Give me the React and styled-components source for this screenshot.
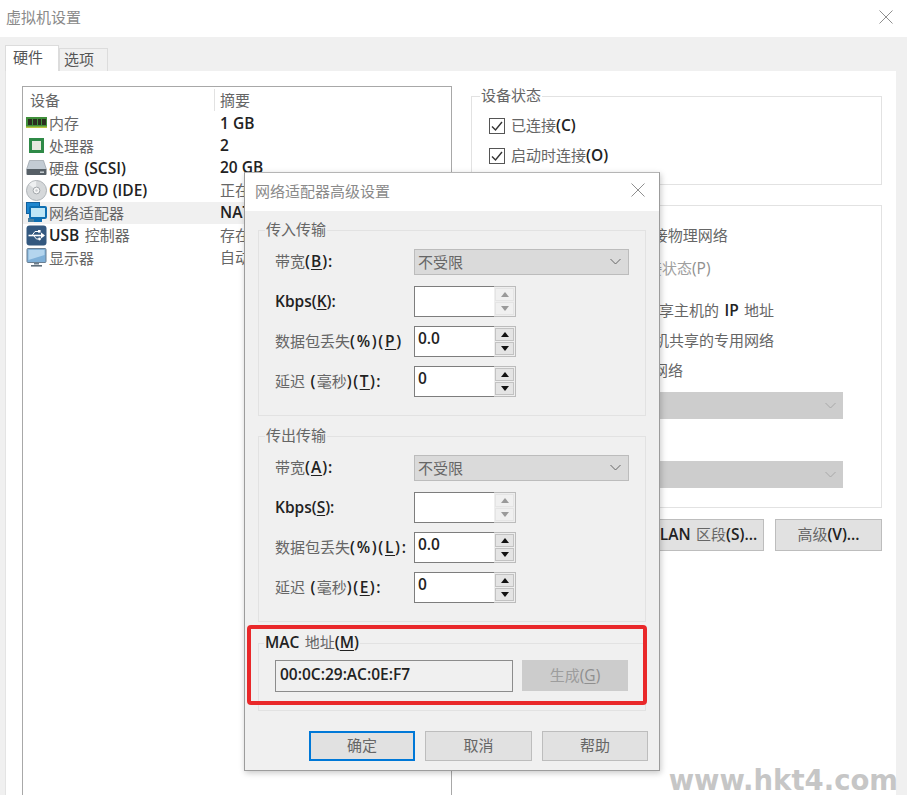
import React from 'react';
import styled, { createGlobalStyle } from 'styled-components';

const Global = createGlobalStyle`
  html, body { margin: 0; padding: 0; background: #fff; }
  body { font-family: "Noto Sans CJK SC", "Open Sans", sans-serif; font-size: 15px; color: #666; word-spacing: 2px; }
  * { box-sizing: border-box; }
`;

const Window = styled.div`
  position: relative;
  width: 907px;
  height: 795px;
  overflow: hidden;
  display: flex;
  flex-direction: column;
  background: #f0f0f0;
`;

const TitleBar = styled.div`
  display: flex;
  align-items: center;
  justify-content: space-between;
  flex: none;
  height: ${p => p.$h}px;
  padding: ${p => p.$pad};
  background: #fff;
  color: #8a8a8a;
  font-size: 15px;
`;

const Tabs = styled.div`
  display: flex;
  align-items: flex-end;
  flex: none;
  height: 34px;
  padding-left: 5px;
`;

const Tab = styled.div`
  display: flex;
  align-items: center;
  width: ${p => p.$w}px;
  height: ${p => (p.$active ? 26 : 23)}px;
  padding: 0 0 ${p => (p.$active ? 4 : 3)}px ${p => p.$pad}px;
  background: ${p => (p.$active ? '#fff' : '#f0f0f0')};
  border: 1px solid #dcdcdc;
  border-bottom: none;
  color: #555;
  line-height: 1;
`;

const Content = styled.div`
  flex: 1;
  min-height: 0;
  display: flex;
  gap: 19px;
  margin: 0 11px 0 5px;
  padding: 15px 14px 0 17px;
  background: #fff;
  border-left: 1px solid #e4e4e4;
`;

const DeviceList = styled.div`
  flex: none;
  width: 430px;
  margin-left: -1px;
  border: 1px solid #a8a8a8;
  border-bottom: none;
`;

const DeviceHead = styled.div`
  display: grid;
  grid-template-columns: 192px 1fr;
  height: 25px;
  padding-top: 1px;
  align-items: center;
  line-height: 22px;
`;

const HeadCell = styled.div`
  height: 22px;
  padding-left: ${p => p.$pad}px;
  border-right: ${p => (p.$sep ? '1px solid #e2e2e2' : 'none')};
`;

const DeviceRow = styled.div`
  display: grid;
  grid-template-columns: 192px 1fr;
  align-items: center;
  height: 22.4px;
  background: ${p => (p.$selected ? '#f0f0f0' : 'transparent')};
  white-space: nowrap;
  line-height: 20px;
`;

const DeviceName = styled.div`
  display: flex;
  align-items: center;
  gap: 2px;
  padding-left: 3px;
`;

const DeviceValue = styled.div`
  padding: 0 0 1px 5px;
`;

const Lt = styled.span`
  font-family: "Open Sans", "Noto Sans", sans-serif;
  font-size: 15.5px;
  font-weight: ${p => (p.$muted ? 500 : 600)};
  color: ${p => (p.$muted ? '#8f8f8f' : '#222')};
  word-spacing: 0;
  letter-spacing: ${p => p.$ls || 0}px;
  u { text-underline-offset: 2px; }
`;

const RightColumn = styled.div`
  flex: 1;
  min-width: 0;
  display: flex;
  flex-direction: column;
  padding-top: 1px;
`;

const Group = styled.fieldset`
  margin: ${p => p.$mt || 0}px 0 0;
  padding: ${p => p.$pad};
  height: ${p => p.$h}px;
  flex: none;
  min-width: 0;
  border: 1px solid #e2e2e2;
`;

const Legend = styled.legend`
  height: 18px;
  padding: 0 1px;
  margin-left: ${p => p.$ml || 0}px;
  font-size: 15px;
  line-height: 16px;
  white-space: nowrap;
`;

const CheckRow = styled.label`
  display: flex;
  align-items: center;
  gap: 6px;
  height: 30px;
  white-space: nowrap;
`;

const CheckText = styled.span`
  padding-bottom: 2px;
`;

const CheckBox = styled.span`
  display: flex;
  width: 16px;
  height: 16px;
  border: 1px solid #555;
  background: #fff;
`;

const NetRow = styled.div`
  height: ${p => p.$h}px;
  margin-top: ${p => p.$mt || 0}px;
  padding-left: ${p => p.$indent}px;
  line-height: ${p => p.$h - 3}px;
  color: ${p => (p.$muted ? '#a0a0a0' : 'inherit')};
  white-space: nowrap;
`;

const GreySelect = styled.div`
  display: flex;
  align-items: center;
  justify-content: flex-end;
  width: 345px;
  height: 27px;
  margin-top: ${p => p.$mt}px;
  margin-left: 26px;
  padding-right: 7px;
  background: #cdcdcd;
`;

const ButtonBar = styled.div`
  display: flex;
  justify-content: flex-end;
  gap: ${p => p.$gap}px;
  margin: ${p => p.$mt}px ${p => p.$mr || 0}px 0 0;
`;

const Button = styled.div`
  width: ${p => p.$w}px;
  height: ${p => p.$h}px;
  background: #e1e1e1;
  border: ${p => (p.$primary ? '2px solid #0078d7' : '1px solid #bdbdbd')};
  line-height: ${p => p.$h - (p.$primary ? 7 : 5)}px;
  text-align: center;
  white-space: nowrap;
`;

/* dialog lies over the settings window */
const Dialog = styled.div`
  position: absolute;
  left: 244px;
  top: 172px;
  width: 416px;
  height: 599px;
  display: flex;
  flex-direction: column;
  background: #f0f0f0;
  border: 1px solid #9c9c9c;
  border-top-color: #b5b5b5;
  box-shadow: 1px 2px 6px rgba(0, 0, 0, 0.22);
`;

const DialogBody = styled.div`
  flex: 1;
  padding: 10px 13px 0;
`;

const FormGrid = styled.div`
  display: grid;
  grid-template-columns: 139px auto;
  justify-content: start;
  align-items: center;
  padding-top: 10px;
`;

const FormLabel = styled.div`
  white-space: nowrap;
  margin-top: ${p => p.$mt || 0}px;
  padding-bottom: 2px;
`;

const Select = styled.div`
  display: flex;
  align-items: center;
  justify-content: space-between;
  width: 215px;
  height: 26px;
  padding: 0 7px 2px 3px;
  background: #dadada;
  border: 1px solid #bcbcbc;
  color: #666;
`;

const Spin = styled.div`
  display: flex;
  width: 102px;
  height: 31px;
  margin-top: ${p => p.$mt}px;
  background: #eee;
  border: 1px solid #bcbcbc;
`;

const SpinInput = styled.div`
  flex: none;
  width: 80px;
  padding: 0 0 0 3px;
  margin: -1px 0 -1px -1px;
  background: #fff;
  border: 1px solid #7d7d7d;
  border-right: none;
  line-height: 22px;
`;

const SpinButtons = styled.div`
  flex: 1;
  display: flex;
  flex-direction: column;
  gap: 1px;
  padding: 1px;
`;

const SpinButton = styled.div`
  flex: 1;
  display: flex;
  align-items: center;
  justify-content: center;
  background: ${p => (p.$on ? '#e4e4e4' : '#f0f0f0')};
  border: 1px solid ${p => (p.$on ? '#c2c2c2' : '#e4e4e4')};

  &::after {
    content: "";
    border-left: 4px solid transparent;
    border-right: 4px solid transparent;
    ${p => (p.$down ? 'border-top' : 'border-bottom')}: 5px solid ${p => (p.$on ? '#111' : '#9a9a9a')};
  }
`;

const MacRow = styled.div`
  display: flex;
  gap: 9px;
  padding: 8px 0 0 16px;
`;

const MacInput = styled.div`
  width: 238px;
  height: 32px;
  padding: 0 0 0 4px;
  background: #f0f0f0;
  border: 1px solid #8c8c8c;
  line-height: 25px;
  white-space: nowrap;
`;

const GenerateButton = styled.div`
  width: 106px;
  height: 31px;
  background: #cccccc;
  color: #9d9d9d;
  line-height: 30px;
  text-align: center;
  white-space: nowrap;
`;

/* annotation drawn over the screenshot */
const Highlight = styled.div`
  position: absolute;
  left: 2px;
  top: 452px;
  width: 400px;
  height: 80px;
  border: 4px solid #e9282a;
  border-radius: 4px;
  pointer-events: none;
`;

const Watermark = styled.div`
  position: absolute;
  right: 9px;
  bottom: 1px;
  font-family: "DejaVu Sans", sans-serif;
  font-weight: 700;
  font-size: 27.5px;
  line-height: 28px;
  word-spacing: 0;
  color: #c6c6c6;
`;

const Close = () => (
  <svg width="14" height="14" viewBox="0 0 14 14" fill="none" stroke="#8f8f8f" strokeWidth="1">
    <path d="M0.5 0.5 13.5 13.5M13.5 0.5 0.5 13.5" />
  </svg>
);

const Chevron = ({ color = '#666' }) => (
  <svg width="11" height="7" viewBox="0 0 11 7" fill="none" stroke={color} strokeWidth="1">
    <path d="M0.5 1 5.5 6 10.5 1" />
  </svg>
);

const Tick = () => (
  <svg width="14" height="14" viewBox="0 0 14 14" fill="none" stroke="#333" strokeWidth="1.4">
    <path d="M2 7.5 5.5 11 12 3" />
  </svg>
);

const Ico = ({ children }) => (
  <svg width="21" height="21" viewBox="0 0 21 21" style={{ flex: 'none' }}>{children}</svg>
);

const MemoryIcon = () => (
  <Ico>
    <rect x="0" y="4" width="21" height="11" fill="#3f8f3a" />
    <rect x="2" y="6" width="4" height="6" fill="#2b2f20" />
    <rect x="7" y="6" width="4" height="6" fill="#2b2f20" />
    <rect x="12" y="6" width="3" height="6" fill="#2b2f20" />
    <rect x="16" y="6" width="4" height="6" fill="#2b2f20" />
    <rect x="0" y="13.5" width="21" height="1.5" fill="#b7c63f" />
  </Ico>
);

const CpuIcon = () => (
  <Ico>
    <rect x="3" y="3" width="15" height="15" fill="#2f8a47" />
    <rect x="6" y="6" width="9" height="9" fill="#e9e9df" />
  </Ico>
);

const DiskIcon = () => (
  <Ico>
    <path d="M3.5 3.5h14l3 9H.5z" fill="#c3ccd4" stroke="#8b949c" strokeWidth=".6" />
    <rect x="0.5" y="12" width="20" height="6" rx="1" fill="#565f66" />
    <rect x="14" y="14.5" width="4" height="1.4" fill="#cfd6da" />
  </Ico>
);

const CdIcon = () => (
  <Ico>
    <circle cx="10.5" cy="10.5" r="10" fill="#d5d8da" stroke="#aeb3b7" />
    <path d="M10.5 10.5 3 4.5A10 10 0 0 1 10 1z" fill="#eef0f1" />
    <circle cx="10.5" cy="10.5" r="3.4" fill="#f6f6f6" stroke="#a3a8ac" />
    <circle cx="10.5" cy="10.5" r="1.2" fill="#c6cacd" />
  </Ico>
);

const NetworkIcon = () => (
  <Ico>
    <rect x="0.5" y="0.5" width="13" height="11" fill="#1f87cf" stroke="#125f9c" />
    <path d="M2 16h11v4H2z" fill="#4a7f9f" />
    <rect x="4" y="5" width="16" height="11" rx="1" fill="#bfe6f6" stroke="#0e6fb2" strokeWidth="2" />
    <path d="M8 17h8v3H8z" fill="#0e6fb2" />
  </Ico>
);

const UsbIcon = () => (
  <Ico>
    <rect x="0.5" y="0.5" width="20" height="20" rx="3" fill="#33587f" />
    <path d="M2.5 10.5h15" stroke="#fff" strokeWidth="1.6" />
    <path d="M15 7.5l4 3-4 3z" fill="#fff" />
    <path d="M6 10.5 9 6.5h3.5M7.5 10.5l3 3.5h2" stroke="#fff" fill="none" />
    <rect x="12" y="5" width="2.6" height="2.6" fill="#fff" />
    <circle cx="13.5" cy="14" r="1.4" fill="#fff" />
  </Ico>
);

const DisplayIcon = () => (
  <Ico>
    <rect x="1" y="1.5" width="19" height="14" rx="1" fill="#7fb0d8" stroke="#6a7f92" />
    <path d="M2.5 3h16v5L2.5 13z" fill="#b4d5ee" />
    <path d="M8 15.5h5v2H8z" fill="#6d7f8d" />
    <path d="M5 18h11v1.6H5z" fill="#5f6f7c" />
  </Ico>
);

const devices = [
  { icon: <MemoryIcon />, name: '内存', value: <Lt>1 GB</Lt> },
  { icon: <CpuIcon />, name: '处理器', value: <Lt>2</Lt> },
  { icon: <DiskIcon />, name: <>硬盘 <Lt>(SCSI)</Lt></>, value: <Lt>20 GB</Lt> },
  { icon: <CdIcon />, name: <Lt>CD/DVD (IDE)</Lt>, value: '正在使用文件' },
  { icon: <NetworkIcon />, name: '网络适配器', value: <Lt>NAT</Lt>, selected: true },
  { icon: <UsbIcon />, name: <><Lt>USB</Lt> 控制器</>, value: '存在' },
  { icon: <DisplayIcon />, name: '显示器', value: '自动检测' },
];

const SpinField = ({ value, on, mt }) => (
  <Spin $mt={mt}>
    <SpinInput><Lt>{value}</Lt></SpinInput>
    <SpinButtons>
      <SpinButton $on={on} />
      <SpinButton $on={on} $down />
    </SpinButtons>
  </Spin>
);

const TransferGroup = ({ title, h, mt, keys, colon }) => (
  <Group $h={h} $mt={mt} $pad="0 0 0 16px">
    <Legend $ml={-10}>{title}</Legend>
    <FormGrid>
      <FormLabel>带宽<Lt $ls={1}>(<u>{keys[0]}</u>):</Lt></FormLabel>
      <Select>不受限<Chevron /></Select>
      <FormLabel $mt={11}><Lt>Kbps(<u>{keys[1]}</u>):</Lt></FormLabel>
      <SpinField mt={11} />
      <FormLabel $mt={9}>数据包丢失<Lt $ls={1.7}>(%)(<u>{keys[2]}</u>){colon ? ':' : ''}</Lt></FormLabel>
      <SpinField mt={9} value="0.0" on />
      <FormLabel $mt={9}>延迟 <Lt $ls={1.5}>(</Lt>毫秒<Lt $ls={1.5}>)(<u>{keys[3]}</u>):</Lt></FormLabel>
      <SpinField mt={9} value="0" on />
    </FormGrid>
  </Group>
);

export default function App() {
  return (
    <Window>
      <Global />
      <TitleBar $h={37} $pad="0 14px 4px 6px">
        <span>虚拟机设置</span>
        <Close />
      </TitleBar>
      <Tabs>
        <Tab $active $w={54} $pad={7}>硬件</Tab>
        <Tab $w={49} $pad={4}>选项</Tab>
      </Tabs>
      <Content>
        <DeviceList>
          <DeviceHead>
            <HeadCell $pad={7} $sep>设备</HeadCell>
            <HeadCell $pad={5}>摘要</HeadCell>
          </DeviceHead>
          {devices.map((d, i) => (
            <DeviceRow key={i} $selected={d.selected}>
              <DeviceName>{d.icon}<span>{d.name}</span></DeviceName>
              <DeviceValue>{d.value}</DeviceValue>
            </DeviceRow>
          ))}
        </DeviceList>
        <RightColumn>
          <Group $h={98} $pad="6px 0 0 17px">
            <Legend $ml={-9}>设备状态</Legend>
            <CheckRow><CheckBox><Tick /></CheckBox><CheckText>已连接<Lt>(C)</Lt></CheckText></CheckRow>
            <CheckRow><CheckBox><Tick /></CheckBox><CheckText>启动时连接<Lt>(O)</Lt></CheckText></CheckRow>
          </Group>
          <Group $h={312} $mt={11} $pad="6px 0 0 0">
            <Legend $ml={8}>网络连接</Legend>
            <NetRow $h={30} $mt={1} $indent={46}>桥接模式<Lt>(B):</Lt> 直接连接物理网络</NetRow>
            <NetRow $h={30} $mt={3} $indent={70} $muted>复制物理网络连接状态<Lt $muted>(P)</Lt></NetRow>
            <NetRow $h={30} $mt={12} $indent={44}><Lt>NAT</Lt> 模式<Lt>(N):</Lt> 用于共享主机的 <Lt>IP</Lt> 地址</NetRow>
            <NetRow $h={30} $indent={46}>仅主机模式<Lt>(H):</Lt> 与主机共享的专用网络</NetRow>
            <NetRow $h={30} $indent={45}>自定义<Lt>(U):</Lt> 特定虚拟网络</NetRow>
            <GreySelect $mt={6}><Chevron color="#a8a8a8" /></GreySelect>
            <GreySelect $mt={42}><Chevron color="#a8a8a8" /></GreySelect>
          </Group>
          <ButtonBar $gap={11} $mt={11}>
            <Button $w={111} $h={32}><Lt>LAN</Lt> 区段<Lt>(S)...</Lt></Button>
            <Button $w={107} $h={32}>高级<Lt>(V)...</Lt></Button>
          </ButtonBar>
        </RightColumn>
      </Content>

      <Dialog>
        <TitleBar $h={38} $pad="0 14px 4px 10px">
          <span>网络适配器高级设置</span>
          <Close />
        </TitleBar>
        <DialogBody>
          <TransferGroup title="传入传输" h={195} keys={['B', 'K', 'P', 'T']} />
          <TransferGroup title="传出传输" h={195} mt={11} keys={['A', 'S', 'L', 'E']} colon />
          <Group $h={77} $mt={12} $pad="0">
            <Legend $ml={5}><Lt>MAC</Lt> 地址<Lt>(<u>M</u>)</Lt></Legend>
            <MacRow>
              <MacInput><Lt>00:0C:29:AC:0E:F7</Lt></MacInput>
              <GenerateButton>生成<Lt $muted>(<u>G</u>)</Lt></GenerateButton>
            </MacRow>
          </Group>
          <ButtonBar $gap={10} $mt={20} $mr={-2}>
            <Button $primary $w={106} $h={30}>确定</Button>
            <Button $w={107} $h={30}>取消</Button>
            <Button $w={106} $h={30}>帮助</Button>
          </ButtonBar>
        </DialogBody>
        <Highlight />
      </Dialog>
      <Watermark>www.hkt4.com</Watermark>
    </Window>
  );
}
